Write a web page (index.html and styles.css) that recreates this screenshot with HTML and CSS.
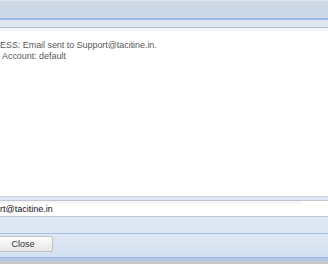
FILE: index.html
```html
<!DOCTYPE html>
<html lang="en">

<head>
    <meta charset="UTF-8">
    <title>Send Email</title>
    <link rel="stylesheet" href="styles.css">
</head>

<body>
    <div class="window">
        <div class="titlebar"></div>
        <div class="toolbar"></div>

        <div class="content">
            <div class="log">
                <div class="log-line">ESS: Email sent to Support@tacitine.in.</div>
                <div class="log-line indent">Account: default</div>
            </div>
        </div>

        <div class="footer">
            <div class="footer-band"></div>
            <div class="address-row">
                <input class="address" type="text" value="Support@tacitine.in" readonly>
            </div>
            <div class="footer-band tall"></div>
            <div class="button-row">
                <button class="button">Close</button>
            </div>
            <div class="statusbar"></div>
        </div>
    </div>
</body>

</html>
```
FILE: styles.css
```css
/* Global styles */
body {
    margin: 0;
    font-family: "Liberation Sans", Tahoma, sans-serif;
    font-size: 9px;
}

.window {
    width: 328px;
    height: 264px;
    overflow: hidden;
    display: flex;
    flex-direction: column;
    background-color: #fff;
}

/* Header bars */
.titlebar {
    height: 17px;
    background-color: #cdd9e6;
    border-top: 1px solid #dde5ef;
    border-bottom: 2px solid #9dbbe6;
}

.toolbar {
    height: 7px;
    background-color: #dfe7f3;
    border-bottom: 1px solid #b6bfcc;
}

/* Message area */
.content {
    flex: 1;
    background: linear-gradient(#eef0f3, #fff 5px);
    overflow: hidden;
}

.log {
    padding-top: 12px;
    color: #5a5a5a;
    white-space: nowrap;
    letter-spacing: -0.05px;
}

.log-line {
    height: 11px;
    line-height: 11px;
}

.log-line.indent {
    padding-left: 2px;
}

/* Footer */
.footer {
    display: flex;
    flex-direction: column;
}

.footer-band {
    height: 3px;
    background-color: #dde6f3;
    border-top: 1px solid #cfd6e0;
    border-bottom: 1px solid #bfc6d1;
}

.footer-band.tall {
    height: 16px;
    border-top: 1px solid #c3c9d3;
    border-bottom: 1px solid #a6c0e6;
}

.address-row {
    height: 15px;
    background-color: #fff;
}

.address {
    width: 100%;
    height: 15px;
    margin: 0 0 0 -26px;
    padding: 0;
    border: none;
    font-family: "Liberation Sans", Tahoma, sans-serif;
    font-size: 9px;
    color: #111;
    background: linear-gradient(#f3f3f3, #fff 4px);
}

.button-row {
    height: 24px;
    padding-top: 2px;
    box-sizing: border-box;
    background: linear-gradient(#dfe8f4, #d3e0f1);
    border-bottom: 1px solid #9fbbe6;
}

.button {
    width: 60px;
    height: 16px;
    margin-left: -7px;
    padding: 0;
    font-family: "Liberation Sans", Tahoma, sans-serif;
    font-size: 9px;
    color: #333;
    background: linear-gradient(#fdfdfd, #e6e6e6);
    border: 1px solid #c2c2c2;
    border-radius: 2px;
}

.statusbar {
    height: 6px;
    background: linear-gradient(#b3c9e8 0, #b3c9e8 3px, #c8c8c8 3px);
}
```
